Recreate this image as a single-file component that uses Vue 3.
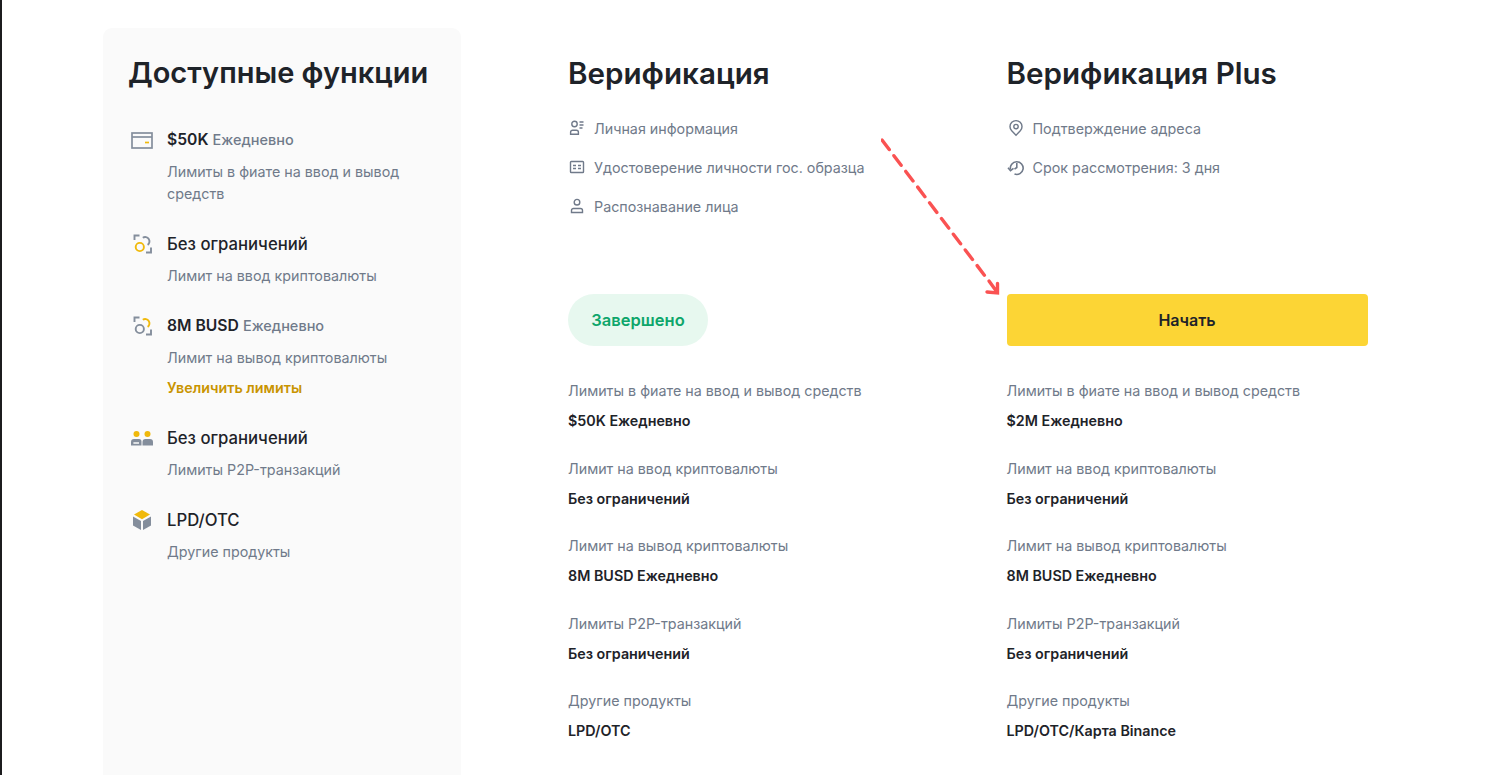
<script setup>
const features = [
  { icon: 'card', head: '$50K', sub: 'Ежедневно', desc: 'Лимиты в фиате на ввод и вывод средств' },
  { icon: 'in', head: 'Без ограничений', desc: 'Лимит на ввод криптовалюты' },
  { icon: 'out', head: '8M BUSD', sub: 'Ежедневно', desc: 'Лимит на вывод криптовалюты', link: 'Увеличить лимиты' },
  { icon: 'p2p', head: 'Без ограничений', desc: 'Лимиты P2P-транзакций' },
  { icon: 'box', head: 'LPD/OTC', desc: 'Другие продукты' },
]
const labels = ['Лимиты в фиате на ввод и вывод средств', 'Лимит на ввод криптовалюты', 'Лимит на вывод криптовалюты', 'Лимиты P2P-транзакций', 'Другие продукты']
const basic = ['$50K Ежедневно', 'Без ограничений', '8M BUSD Ежедневно', 'Без ограничений', 'LPD/OTC']
const plus = ['$2M Ежедневно', 'Без ограничений', '8M BUSD Ежедневно', 'Без ограничений', 'LPD/OTC/Карта Binance']
const columns = [
  { title: 'Верификация', reqs: [['person', 'Личная информация'], ['id', 'Удостоверение личности гос. образца'], ['face', 'Распознавание лица']], values: basic, done: true },
  { title: 'Верификация Plus', reqs: [['pin', 'Подтверждение адреса'], ['clock', 'Срок рассмотрения: 3 дня']], values: plus, done: false },
]
</script>

<template>
  <div class="page">
    <aside class="panel">
      <h2 class="title">Доступные функции</h2>
      <ul class="features">
        <li v-for="f in features" :key="f.desc" class="feature">
          <span class="f-icon">
            <svg v-if="f.icon === 'card'" width="22" height="17" viewBox="0 0 22 17">
              <rect x="1" y="1" width="20" height="15" fill="none" stroke="#848e9c" stroke-width="1.7" />
              <path d="M1 5h20" stroke="#848e9c" stroke-width="1.7" />
              <path d="M14 10.5h4" stroke="#f0b90b" stroke-width="1.7" />
            </svg>
            <svg v-else-if="f.icon === 'in' || f.icon === 'out'" width="20" height="20" viewBox="0 0 20 20" fill="none" stroke-width="1.9">
              <path d="M7.5 1.5h-5V6M19 13.5v5h-5" stroke="#848e9c" />
              <circle cx="7.8" cy="13" r="4.100" :stroke="f.icon === 'in' ? '#f0b90b' : '#848e9c'" />
              <path d="M10.800 3.800a4.200 4.200 0 1 1 4.800 7.100" :stroke="f.icon === 'in' ? '#848e9c' : '#f0b90b'" />
            </svg>
            <svg v-else-if="f.icon === 'p2p'" width="22" height="15" viewBox="0 0 22 15">
              <circle cx="5.500" cy="3" r="3" fill="#f0b90b" />
              <circle cx="16.500" cy="3" r="3" fill="#f0b90b" />
              <path d="M0 14.500v-3.500a3 3 0 0 1 3-3h5a2.500 2.500 0 0 1 2.500 2.500v4zM8 11.200H2.400v1.600H8zM11.500 14.500V11a3 3 0 0 1 3-3h4.500a3 3 0 0 1 3 3v3.500z" fill="#848e9c" fill-rule="evenodd" />
            </svg>
            <svg v-else width="18" height="20" viewBox="0 0 18 20">
              <path d="M9 0l8 4.600-8 4.600-8-4.600z" fill="#f0b90b" />
              <path d="M0 6.400l8 4.600v9l-8-4.400z" fill="#848e9c" />
              <path d="M18 6.400l-8 4.600v9l8-4.400z" fill="#848e9c" />
            </svg>
          </span>
          <div class="f-body">
            <div class="f-head" :class="{ compact: f.sub }">{{ f.head }}<span v-if="f.sub" class="f-sub">{{ f.sub }}</span></div>
            <div class="f-desc">{{ f.desc }}</div>
            <div v-if="f.link" class="f-link">{{ f.link }}</div>
          </div>
        </li>
      </ul>
    </aside>

    <section v-for="c in columns" :key="c.title" class="col">
      <h2 class="title col-title">{{ c.title }}</h2>
      <ul class="reqs">
        <li v-for="r in c.reqs" :key="r[1]" class="req">
          <svg width="18" height="18" viewBox="0 0 18 18" fill="none" stroke="#707a8a" stroke-width="1.4">
            <template v-if="r[0] === 'person'">
              <circle cx="6.500" cy="5" r="2.700" />
              <path d="M2.600 15.200v-2a2 2 0 0 1 2-2h3.800a2 2 0 0 1 2 2v2z" />
              <path d="M11.500 3h4M11.500 6h4M11.500 9h3" />
            </template>
            <template v-else-if="r[0] === 'id'">
              <rect x="2.500" y="3.500" width="13" height="11" rx=".8" />
              <path d="M5 7.500h3M5 10.500h3M10 7.500h3M10 10.500h3" />
            </template>
            <template v-else-if="r[0] === 'face'">
              <circle cx="9" cy="5.200" r="2.800" />
              <path d="M3.500 15.500v-2a2 2 0 0 1 2-2h7a2 2 0 0 1 2 2v2z" />
            </template>
            <template v-else-if="r[0] === 'pin'">
              <path d="M9 16.200l-4.300-4.400a6 6 0 1 1 8.600 0z" />
              <circle cx="9" cy="7.600" r="2.200" />
            </template>
            <template v-else>
              <path d="M3.500 11.500a6.400 6.400 0 1 1 4 4.600" stroke-width="1.600" />
              <path d="M9.800 5v4.500l-2.300 1.700" stroke-width="1.600" />
              <path d="M1 9.800l2.500 2.900 3-2.300" stroke-width="1.600" />
            </template>
          </svg>
          <span>{{ r[1] }}</span>
        </li>
      </ul>
      <div class="action">
        <span v-if="c.done" class="done">Завершено</span>
        <button v-else class="start">Начать</button>
      </div>
      <dl class="limits">
        <div v-for="(l, i) in labels" :key="l" class="limit">
          <dt>{{ l }}</dt>
          <dd>{{ c.values[i] }}</dd>
        </div>
      </dl>
    </section>

    <svg class="arrow" width="125" height="160" viewBox="0 0 125 160" fill="none" stroke="#fa5252" stroke-width="3.400" stroke-linecap="round">
      <path d="M1 2L104 138" stroke-dasharray="12 7.700" />
      <path d="M108 143L116 154M116.500 145.500L116.500 155L106 154" />
    </svg>
  </div>
</template>

<style>
html, body { margin: 0; background: #fff; overflow: hidden; }
</style>

<style scoped>
.page {
  position: relative;
  box-sizing: border-box;
  height: 775px;
  overflow: hidden;
  display: flex;
  padding: 28px 0 0 101px;
  border-left: 2px solid #1c1c1e;
  font-family: Inter, "Noto Sans", sans-serif;
  color: #1e2329;
}
.panel {
  box-sizing: border-box;
  width: 358px;
  height: 760px;
  flex: none;
  margin-right: 107px;
  padding: 26px 25px;
  background: #fafafa;
  border-radius: 9px;
}
.title {
  margin: 0;
  font-size: 29px;
  line-height: 38px;
  font-weight: 600;
  white-space: nowrap;
}
.col-title { font-size: 29.6px; }
ul { list-style: none; margin: 0; padding: 0; }
.features { margin-top: 36px; display: flex; flex-direction: column; gap: 27px; }
.feature { display: flex; }
.f-icon { width: 39px; height: 24px; flex: none; display: flex; align-items: center; justify-content: center; padding: 0 14px 0 3px; box-sizing: border-box; }
.f-head { font-size: 16.7px; line-height: 24px; font-weight: 500; white-space: nowrap; }
.f-head.compact { font-size: 15.7px; font-weight: 600; }
.f-sub { margin-left: 4px; font-size: 14.5px; font-weight: 500; color: #707a8a; }
.f-desc { margin-top: 9px; font-size: 14.3px; line-height: 22px; color: #707a8a; width: 250px; }
.f-link { margin-top: 8px; font-size: 14.3px; line-height: 22px; font-weight: 600; color: #c99400; }
.col { width: 438.5px; flex: none; padding-top: 25.5px; box-sizing: border-box; }
.reqs { margin-top: 25.5px; height: 177px; display: flex; flex-direction: column; gap: 17px; }
.req { display: flex; align-items: center; gap: 8px; height: 22px; font-size: 14.3px; color: #707a8a; }
.action { height: 52px; }
.done {
  display: inline-flex; align-items: center; justify-content: center;
  width: 140px; height: 52px; border-radius: 26px;
  background: #e7f8ef; color: #0ea66b;
  font-size: 16.5px; font-weight: 600;
}
.start {
  display: block; width: 361px; height: 52px; border: 0; border-radius: 4px;
  background: #fcd535; color: #1e2329;
  font: 600 16px Inter, "Noto Sans", sans-serif;
}
.limits { margin: 0; padding-top: 34px; display: flex; flex-direction: column; gap: 25.5px; }
.limit { display: flex; flex-direction: column; gap: 8px; }
dt { font-size: 14.3px; line-height: 22px; color: #707a8a; white-space: nowrap; }
dd { margin: 0; font-size: 14.3px; line-height: 22px; font-weight: 600; color: #1e2329; }
.arrow { position: absolute; left: 879px; top: 138px; }
</style>
